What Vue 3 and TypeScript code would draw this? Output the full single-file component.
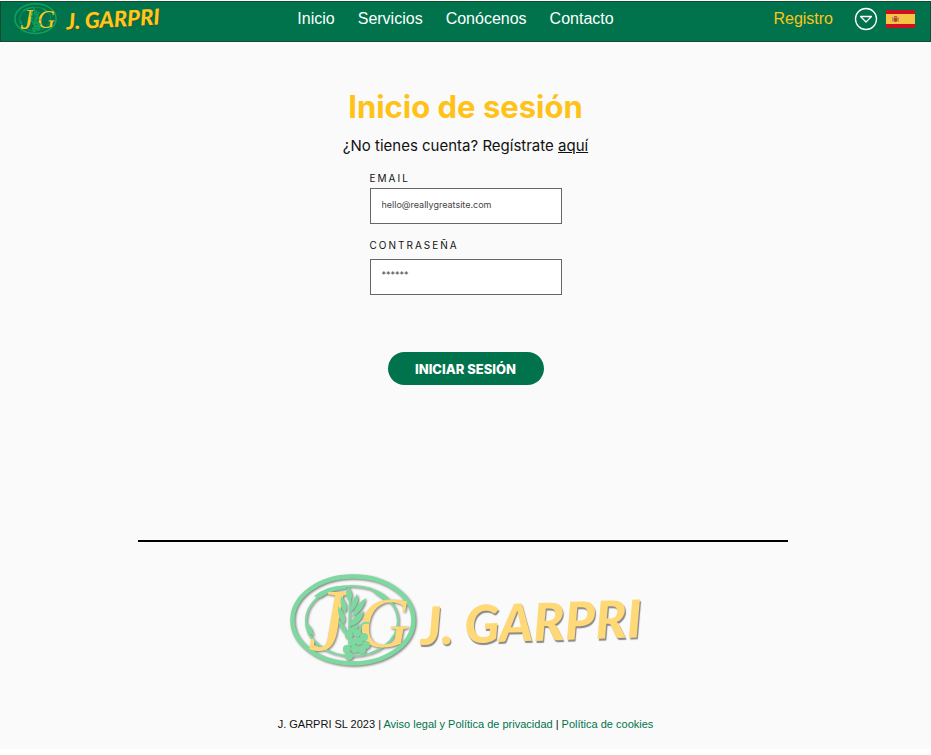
<script setup lang="ts">
import { ref } from 'vue'

interface NavLink {
  label: string
  href: string
}

const links: NavLink[] = [
  { label: 'Inicio', href: '#inicio' },
  { label: 'Servicios', href: '#servicios' },
  { label: 'Conócenos', href: '#conocenos' },
  { label: 'Contacto', href: '#contacto' },
]

const email = ref('')
const password = ref('')
</script>

<template>
  <div class="page">
    <svg class="defs" aria-hidden="true">
      <defs>
        <symbol id="emblem" viewBox="0 0 126 94">
          <ellipse cx="63" cy="46" rx="60.5" ry="43.5" fill="none" stroke="currentColor" stroke-width="4.5" />
          <ellipse cx="62" cy="47" rx="46" ry="35" fill="none" stroke="currentColor" stroke-width="2" />
          <path d="M24 22Q40 10 57 12L56 15Q41 16 30 24Z" fill="currentColor" />
          <path d="M16 49Q22 52 24 62Q17 60 16 49Z" fill="currentColor" />
          <path d="M80 15Q95 17 102 30Q92 26 80 15Z" fill="currentColor" />
          <g class="initials">
            <text class="initial-j" x="18" y="76">J</text>
            <text class="initial-g" x="68" y="73">G</text>
          </g>
          <g fill="currentColor">
            <path d="M58 13Q65 19 60 28Q53 22 58 13Z" />
            <path d="M51 22Q60 31 55 39Q49 33 51 22Z" />
            <path d="M48 32Q58 42 54 50Q47 43 48 32Z" />
            <path d="M48 45Q58 53 56 61Q49 55 48 45Z" />
            <path d="M67 20Q71 29 61 38Q60 28 67 20Z" />
            <path d="M76 24Q74 37 62 43Q65 30 76 24Z" />
            <path d="M74 37Q72 50 58 53Q63 41 74 37Z" />
            <path d="M70 50Q65 60 55 62Q57 53 70 50Z" />
            <circle cx="59" cy="61" r="4" />
            <circle cx="67" cy="59" r="4" />
            <circle cx="74" cy="63" r="4" />
            <circle cx="62" cy="68" r="4" />
            <circle cx="69" cy="67" r="4" />
            <circle cx="76" cy="71" r="4" />
            <circle cx="57" cy="75" r="4" />
            <circle cx="65" cy="75" r="4" />
            <circle cx="72" cy="76" r="4" />
            <circle cx="59" cy="82" r="4" />
          </g>
          <path d="M59 62L60 26M70 57Q70 47 79 49" fill="none" stroke="currentColor" stroke-width="2" />
        </symbol>
      </defs>
    </svg>

    <header class="topbar">
      <a class="brand" href="#inicio">
        <svg class="emblem" role="img" aria-label="JG"><use href="#emblem" /></svg>
        <span class="wordmark">J. GARPRI</span>
      </a>
      <nav class="nav">
        <a v-for="link in links" :key="link.label" :href="link.href">{{ link.label }}</a>
      </nav>
      <div class="actions">
        <a class="register" href="#registro">Registro</a>
        <button class="language" type="button" aria-label="Idioma">
          <svg width="24" height="24" viewBox="0 0 24 24" fill="none" stroke="#fff" stroke-width="1.3">
            <circle cx="12" cy="12" r="10.5" />
            <path d="M6.5 9.5H17.5L12 15Z" stroke-linejoin="round" />
          </svg>
          <svg width="29" height="18" viewBox="0 0 29 18">
            <path d="M0 0H29V18H0Z" fill="#cf1020" />
            <path d="M0 4H29V14H0Z" fill="#f6c445" />
            <path d="M6 7H7V12H6ZM12 7H13V12H12Z" fill="#b98a72" />
            <path d="M7.500 7.500H11.500V11Q9.500 13 7.500 11Z" fill="#b8442f" />
            <path d="M8 6H11V7H8Z" fill="#a5642d" />
          </svg>
        </button>
      </div>
    </header>

    <main class="login">
      <h1>Inicio de sesión</h1>
      <p class="signup">¿No tienes cuenta? Regístrate <a href="#registro">aquí</a></p>
      <form @submit.prevent>
        <label for="email">EMAIL</label>
        <input id="email" v-model="email" type="email" placeholder="hello@reallygreatsite.com" />
        <label for="password">CONTRASEÑA</label>
        <input id="password" v-model="password" type="password" placeholder="******" />
        <button class="submit" type="submit">INICIAR SESIÓN</button>
      </form>
    </main>

    <footer class="footer">
      <hr />
      <div class="brand brand-large">
        <svg class="emblem" role="img" aria-label="JG"><use href="#emblem" /></svg>
        <span class="wordmark">J. GARPRI</span>
      </div>
      <p class="legal">
        J. GARPRI SL 2023 | <a href="#privacidad">Aviso legal y Política de privacidad</a> |
        <a href="#cookies">Política de cookies</a>
      </p>
    </footer>
  </div>
</template>

<style>
body {
  background: #fff;
}
</style>

<style scoped>
* {
  box-sizing: border-box;
}

.page {
  background: #fafafa;
  color: #111;
  font-family: "Liberation Sans", Arial, sans-serif;
  overflow: hidden;
}

.defs {
  position: absolute;
  width: 0;
  height: 0;
}

a {
  color: inherit;
  text-decoration: none;
}

.topbar {
  display: grid;
  grid-template-columns: 1fr auto 1fr;
  height: 41px;
  margin-top: 1px;
  padding: 0 15px 6px 13px;
  align-items: center;
  background: #00734c;
  border: 1px solid #174832;
  color: #fff;
  font-size: 16px;
}

.brand {
  --gold: #ffc61c;
  display: flex;
  align-items: center;
  gap: 9px;
  color: #12a05a;
}

.emblem {
  width: 43px;
  height: 32px;
}

.initials {
  fill: var(--gold);
  font-family: "Liberation Serif", "Times New Roman", serif;
  font-style: italic;
}

.initial-j {
  font-size: 88px;
}

.initial-g {
  font-size: 72px;
}

.wordmark {
  color: var(--gold);
  font-family: Lato, sans-serif;
  font-size: 22px;
  font-style: italic;
  font-weight: 900;
  line-height: 1;
  white-space: nowrap;
  text-shadow: 1px 1px 1px #35562c;
  transform: rotate(-3deg);
}

.nav {
  display: flex;
  gap: 23px;
  margin-right: 18px;
}

.actions {
  display: flex;
  align-items: center;
  justify-content: flex-end;
  gap: 21px;
}

.register {
  color: #fcc419;
}

.language {
  display: flex;
  align-items: center;
  gap: 8px;
  padding: 0;
  border: 0;
  background: none;
}

.login {
  display: flex;
  flex-direction: column;
  align-items: center;
  padding-top: 45px;
  font-family: Inter, sans-serif;
}

h1 {
  margin: 0;
  color: #ffc219;
  font-size: 31px;
  font-weight: 700;
  line-height: 40px;
}

.signup {
  margin: 9px 0 0;
  font-size: 15px;
  line-height: 20px;
}

.signup a {
  text-decoration: underline;
}

form {
  display: flex;
  flex-direction: column;
  width: 192px;
  margin-top: 14px;
}

label {
  font-size: 10px;
  letter-spacing: 2px;
  line-height: 16px;
}

input {
  height: 36px;
  margin: 2px 0 13px;
  padding: 0 11px 3px;
  border: 1px solid #666;
  border-radius: 0;
  background: #fff;
  font-family: inherit;
  font-size: 9px;
}

input::placeholder {
  color: #444;
  opacity: 1;
}

#password {
  margin: 6px 0 0;
  padding-bottom: 5px;
}

.submit {
  align-self: center;
  width: 156px;
  height: 33px;
  margin-top: 57px;
  padding: 0;
  border: 0;
  border-radius: 17px;
  background: #00734c;
  color: #fff;
  font-family: inherit;
  font-size: 13px;
  font-weight: 800;
}

.footer {
  margin-top: 155px;
  padding-bottom: 17px;
}

hr {
  height: 2px;
  margin: 0 143px 0 138px;
  border: 0;
  background: #000;
}

.brand-large {
  --gold: #ffd978;
  justify-content: center;
  gap: 4px;
  margin-top: 32px;
  color: #7dd9a0;
}

.brand-large .emblem {
  width: 126px;
  height: 94px;
  filter: drop-shadow(1px 1px 1px #777);
}

.brand-large .wordmark {
  font-size: 52px;
  text-shadow: 1px 2px 1px #888;
  transform: rotate(-2deg);
}

.legal {
  margin: 48px 0 0;
  font-size: 11px;
  line-height: 16px;
  text-align: center;
}

.legal a {
  color: #00734c;
}
</style>
